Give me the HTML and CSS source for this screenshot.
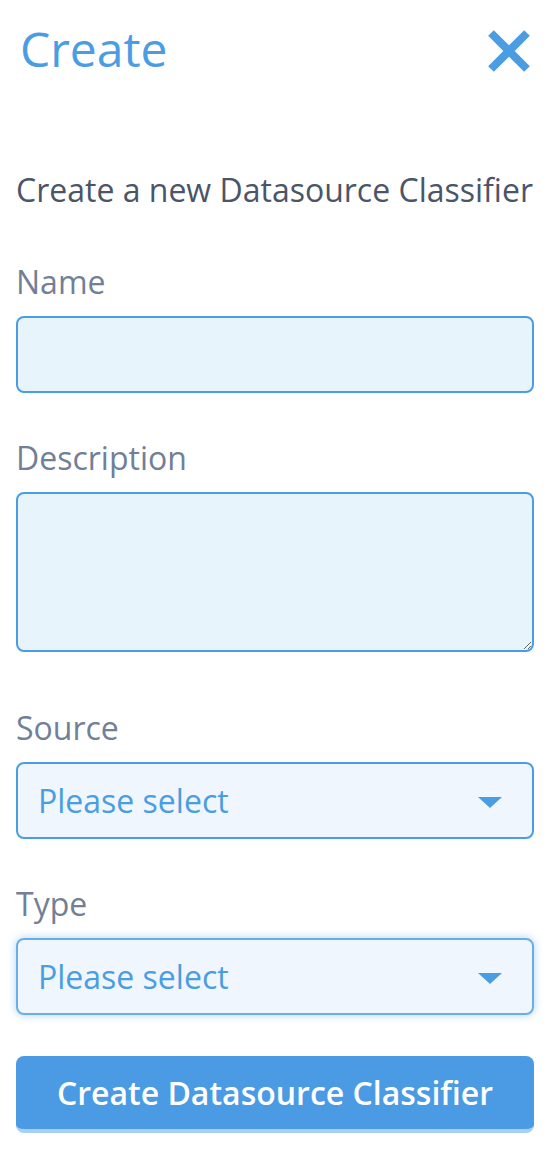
FILE: index.html
```html
<!DOCTYPE html>
<html lang="en">
<head>
<meta charset="utf-8">
<title>Create</title>
<link rel="stylesheet" href="styles.css">
</head>
<body>
<div class="panel">
  <header class="panel-header">
    <h1 class="panel-title">Create</h1>
    <button class="close-btn" type="button" aria-label="Close">
      <svg width="46" height="46" viewBox="0 0 46 46" aria-hidden="true">
        <path d="M5 5 L41 41 M41 5 L5 41" stroke="#4a9de3" stroke-width="8" fill="none"/>
      </svg>
    </button>
  </header>

  <p class="intro">Create a new Datasource Classifier</p>

  <form class="form">
    <div class="field">
      <label class="field-label">Name</label>
      <input class="text-input" type="text">
    </div>
    <div class="field">
      <label class="field-label">Description</label>
      <textarea class="text-area"></textarea>
    </div>
    <div class="field field-source">
      <label class="field-label">Source</label>
      <div class="select">
        <span class="select-text">Please select</span>
        <span class="select-arrow"></span>
      </div>
    </div>
    <div class="field">
      <label class="field-label">Type</label>
      <div class="select select-focus">
        <span class="select-text">Please select</span>
        <span class="select-arrow"></span>
      </div>
    </div>
    <button class="submit-btn" type="button">Create Datasource Classifier</button>
  </form>
</div>
</body>
</html>
```

FILE: styles.css
```css
* { box-sizing: border-box; }

html, body {
  margin: 0;
  padding: 0;
  background: #ffffff;
}

body {
  font-family: "Open Sans", "Noto Sans", sans-serif;
}

.panel {
  padding: 0 14px 0 16px;
  display: flex;
  flex-direction: column;
}

.panel-header {
  display: flex;
  justify-content: space-between;
  align-items: flex-start;
  height: 170px;
  padding-top: 19px;
}

.panel-title {
  margin: 0 0 0 4px;
  font-size: 48px;
  line-height: 60px;
  font-weight: 400;
  color: #4a9de3;
}

.close-btn {
  border: 0;
  background: transparent;
  padding: 0;
  margin: 9px 2px 0 0;
  width: 46px;
  height: 46px;
  display: block;
}

.close-btn svg { display: block; }

.intro {
  margin: -1px 0 0 0;
  font-size: 32px;
  line-height: 41px;
  color: #4a5568;
}

.form {
  display: flex;
  flex-direction: column;
  margin-top: 50px;
}

.field {
  display: flex;
  flex-direction: column;
  margin-bottom: 43px;
}

.field-label {
  font-size: 32px;
  line-height: 41px;
  color: #718096;
  margin: 1px 0 14px 0;
}

.text-input,
.text-area {
  display: block;
  width: 100%;
  border: 2px solid #4a9de3;
  border-radius: 8px;
  background: #e8f4fc;
  font: inherit;
  outline: none;
}

.text-input { height: 77px; }

.text-area {
  height: 160px;
  resize: vertical;
}

.field-source { margin-top: 11px; }

.select {
  display: flex;
  align-items: center;
  justify-content: space-between;
  height: 77px;
  border: 2px solid #4a9de3;
  border-radius: 8px;
  background: #f0f6fd;
  padding: 0 30px 0 20px;
}

.select-focus {
  border-color: #6aaee9;
  box-shadow: 0 0 8px rgba(74, 157, 227, 0.45);
}

.select-text {
  font-size: 32px;
  color: #4a9de3;
}

.select-arrow {
  width: 0;
  height: 0;
  border-left: 12px solid transparent;
  border-right: 12px solid transparent;
  border-top: 11px solid #4a9de3;
  margin-top: 4px;
}

.submit-btn {
  margin-top: -2px;
  height: 77px;
  border: 0;
  border-bottom: 4px solid #a6d0f4;
  border-radius: 8px;
  background: #4a9be3;
  color: #ffffff;
  font-family: "Open Sans", "Noto Sans", sans-serif;
  font-size: 32px;
  font-weight: 600;
  width: 100%;
}
```
